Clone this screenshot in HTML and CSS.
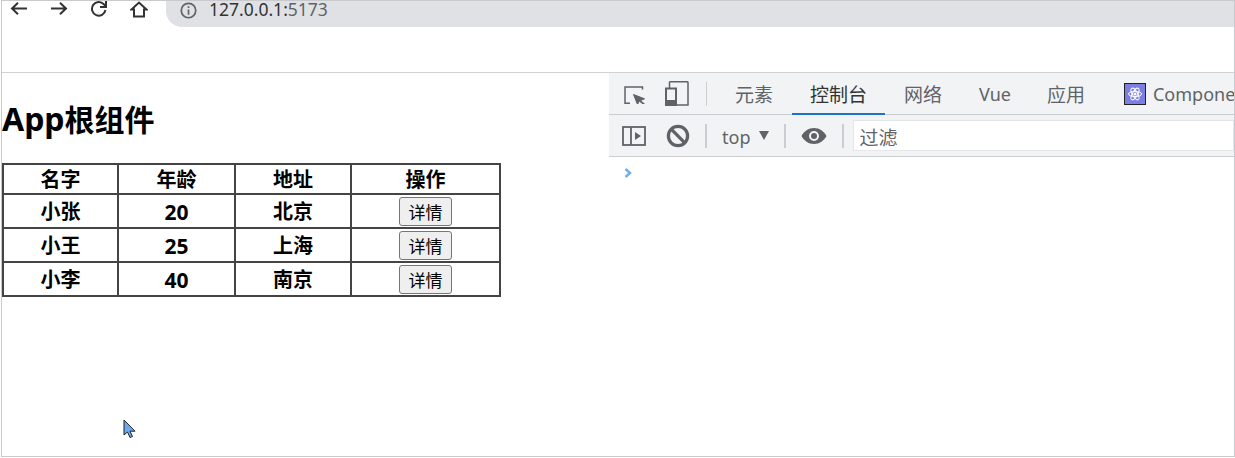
FILE: index.html
```html
<!DOCTYPE html>
<html lang="zh">
<head>
<meta charset="utf-8">
<title>App</title>
<link rel="stylesheet" href="styles.css">
</head>
<body>
<div class="frame">
  <header class="browser">
    <div class="nav">
      <svg class="nav-icon" viewBox="0 0 18 18"><path d="M17 8.500H2M8 2.800 2 8.500l6 5.700"/></svg>
      <svg class="nav-icon" viewBox="0 0 18 18"><path d="M1 8.500h15M10 2.800l6 5.700-6 5.700"/></svg>
      <svg class="nav-icon" viewBox="0 0 18 18"><path d="M15.500 10a6.800 6.800 0 1 1-1.700-5.800L15.800 6.500M16 1v6h-6"/></svg>
      <svg class="nav-icon" viewBox="0 0 18 18"><path d="M1.500 9.500 9 2.500l7.500 7H14V16.500H4V9.500z"/></svg>
    </div>
    <div class="omnibox">
      <svg class="info" viewBox="0 0 16 16"><circle cx="8" cy="8" r="6.800"/><path d="M8 7v5M8 4v1.600"/></svg>
      <span class="url">127.0.0.1:<span class="port">5173</span></span>
    </div>
  </header>
  <main class="split">
    <section class="app">
      <h1 class="title"><span class="latin">App</span>根组件</h1>
      <table class="people">
        <thead>
          <tr><th class="c1">名字</th><th class="c2">年龄</th><th class="c3">地址</th><th class="c4">操作</th></tr>
        </thead>
        <tbody>
          <tr><td>小张</td><td class="num">20</td><td>北京</td><td class="act"><button class="detail">详情</button></td></tr>
          <tr><td>小王</td><td class="num">25</td><td>上海</td><td class="act"><button class="detail">详情</button></td></tr>
          <tr><td>小李</td><td class="num">40</td><td>南京</td><td class="act"><button class="detail">详情</button></td></tr>
        </tbody>
      </table>
    </section>
    <section class="devtools">
      <div class="tabs">
        <svg class="tool inspect" viewBox="0 0 22 18"><path class="thin" d="M6 17.200H1V1h17.500v2.500"/><path class="arrow" d="m9.500 8.500 11 4.300-4 1.700 4 3.500-1.500 0-3.800-3-1.700 3.500z"/></svg>
        <svg class="tool device" viewBox="0 0 24 25"><path class="thin" d="M4.500 7V1.500A1 1 0 0 1 5.500.7h16.500a1 1 0 0 1 1 1V24H12"/><rect class="thick" x="1" y="7.500" width="10" height="16.500"/><rect class="solid" x="1" y="19" width="10" height="5"/></svg>
        <span class="divider tall"></span>
        <span class="tab t1">元素</span>
        <span class="tab active">控制台</span>
        <span class="tab t3">网络</span>
        <span class="tab t4">Vue</span>
        <span class="tab t5">应用</span>
        <svg class="vue-logo" viewBox="0 0 22 22"><rect x="0.500" y="0.500" width="21" height="21" fill="#7b80e0" stroke="#222"/><g fill="none" stroke="#fff" stroke-width="1"><ellipse cx="11" cy="11" rx="6.500" ry="2.600"/><ellipse cx="11" cy="11" rx="6.500" ry="2.600" transform="rotate(60 11 11)"/><ellipse cx="11" cy="11" rx="6.500" ry="2.600" transform="rotate(120 11 11)"/></g><circle cx="11" cy="11" r="1.500" fill="#fff"/></svg>
        <span class="tab comp">Components</span>
      </div>
      <div class="filters">
        <svg class="tool sidebar" viewBox="0 0 24 20"><rect class="thin2" x="1" y="1" width="22" height="18"/><path class="thin2" d="M9 1v18"/><path class="fillgrey" d="m13 6 6 4-6 4z"/></svg>
        <svg class="tool clear" viewBox="0 0 22 22"><circle class="ring" cx="11" cy="11" r="8.800"/><path class="ring" d="m5 5 12 12"/></svg>
        <span class="divider short d1"></span>
        <span class="ctx">top</span>
        <span class="caret"></span>
        <span class="divider short d2"></span>
        <svg class="tool eye" viewBox="0 0 26 16"><path class="fillgrey" fill-rule="evenodd" d="M13 0C7.500 0 3 3.300 0.500 8 3 12.700 7.500 16 13 16s10-3.300 12.500-8C23 3.300 18.500 0 13 0zm0 13a5 5 0 1 1 0-10 5 5 0 0 1 0 10z"/><circle class="fillgrey" cx="13" cy="8" r="3"/></svg>
        <span class="divider short d3"></span>
        <div class="filter"><span class="filter-text">过滤</span></div>
      </div>
      <div class="console">
        <svg class="prompt" viewBox="0 0 8 10"><path d="m1.500 1 4.500 4-4.500 4"/></svg>
      </div>
    </section>
  </main>
  <svg class="pointer" viewBox="0 0 14 20"><path d="M1 1v15l3.500-3 2.500 5.500 2.500-1-2.500-5.300h5z"/></svg>
</div>
</body>
</html>
```
FILE: styles.css
```css
* { box-sizing: border-box; }
html, body { margin: 0; padding: 0; background: #fff; }
body { width: 1235px; height: 458px; overflow: hidden; font-family: "Noto Sans CJK SC", "Noto Sans", sans-serif; }
.frame { position: relative; margin-left: 1px; width: 1234px; height: 457px; border: 1px solid #c8cacd; overflow: hidden; display: flex; flex-direction: column; }
.browser { height: 72px; flex: none; display: flex; align-items: flex-start; border-bottom: 1px solid #cfd1d4; }
.nav { display: flex; gap: 22px; padding: 0 0 0 8px; height: 18px; }
.nav-icon { width: 18px; height: 18px; fill: none; stroke: #333; stroke-width: 2; margin-top: -1px; }
.omnibox { margin-left: 18px; flex: 1; height: 26px; background: #dfe1e5; border-bottom-left-radius: 16px; display: flex; align-items: flex-start; padding-left: 14px; }
.info { width: 17px; height: 17px; margin-top: 1px; fill: none; stroke: #5f6368; stroke-width: 1.600; }
.url { margin-left: 12px; margin-top: -1px; font-family: "Noto Sans", sans-serif; font-size: 17.500px; line-height: 18px; color: #333; }
.port { color: #5f6368; }
.split { flex: 1; display: flex; min-height: 0; }
.app { width: 607px; flex: none; }
.title { margin: 26px 0 0; font-size: 30px; line-height: 40px; font-weight: 700; color: #000; font-family: "Noto Sans", "Noto Sans CJK SC", sans-serif; }
.latin { font-size: 32px; }
.people { margin: 23px 0 0 0; border-collapse: collapse; table-layout: fixed; width: 498px; font-family: "Noto Sans", "Noto Sans CJK SC", sans-serif; }
.people th, .people td { border: 2px solid #444; padding: 2px 0 0; text-align: center; font-size: 20px; font-weight: 700; color: #000; height: 34px; line-height: 24px; }
.people th { height: 30px; padding-top: 2px; }
.people .num { font-size: 21px; }
.people .act { padding: 0; }
.c1 { width: 115px; } .c2 { width: 117px; } .c3 { width: 116px; } .c4 { width: 149px; }
.detail { display: block; margin: 0 auto; width: 53px; height: 29px; padding: 0; border: 1px solid #767676; border-radius: 3px; background: #efefef; font: 400 17px/25px "Noto Sans CJK SC", sans-serif; color: #000; }
.devtools { flex: 1; min-width: 0; display: flex; flex-direction: column; overflow: hidden; }
.tabs { height: 42px; flex: none; background: #f1f3f4; border-bottom: 1px solid #cbcdd1; display: flex; align-items: center; white-space: nowrap; }
.filters { height: 42px; flex: none; background: #f1f3f4; border-bottom: 1px solid #cbcdd1; display: flex; align-items: center; white-space: nowrap; }
.tool { flex: none; }
.inspect { width: 22px; height: 18px; margin-left: 15px; margin-top: 2px; }
.device { width: 24px; height: 25px; margin-left: 19px; }
.thin { fill: none; stroke: #5f6368; stroke-width: 1.500; }
.thick { fill: #f1f3f4; stroke: #5f6368; stroke-width: 2; }
.solid { fill: #5f6368; }
.arrow { fill: #5f6368; stroke: #5f6368; stroke-width: 1; stroke-linejoin: round; }
.divider { flex: none; width: 1px; background: #cbcdd1; }
.divider.tall { height: 24px; margin-left: 17px; }
.divider.short { height: 24px; width: 2px; }
.tab { flex: none; font-size: 19px; line-height: 42px; color: #5f6368; height: 42px; }
.t1 { margin-left: 28px; }
.active { margin-left: 37px; color: #333; position: relative; }
.active::after { content: ""; position: absolute; left: -18px; right: -18px; bottom: 0; height: 2px; background: #1a73c8; }
.t3 { margin-left: 37px; }
.t4 { margin-left: 37px; font-family: "Noto Sans", sans-serif; font-size: 18px; }
.t5 { margin-left: 36px; }
.vue-logo { flex: none; width: 22px; height: 22px; margin-left: 39px; }
.comp { margin-left: 7px; font-family: "Noto Sans", sans-serif; font-size: 18px; }
.sidebar { width: 24px; height: 20px; margin-left: 13px; }
.thin2 { fill: none; stroke: #5f6368; stroke-width: 1.800; }
.fillgrey { fill: #5f6368; }
.clear { width: 24px; height: 24px; margin-left: 20px; }
.ring { fill: none; stroke: #5f6368; stroke-width: 3; }
.filters .divider.d1 { margin-left: 15px; }
.ctx { margin-left: 15px; margin-top: 2px; font-family: "Noto Sans", sans-serif; font-size: 18px; color: #5f6368; }
.caret { margin-left: 9px; width: 0; height: 0; border-left: 5.500px solid transparent; border-right: 5.500px solid transparent; border-top: 9px solid #5f6368; }
.filters .divider.d2 { margin-left: 15px; }
.eye { width: 26px; height: 16px; margin-left: 15px; }
.filters .divider.d3 { margin-left: 15px; }
.filter { margin-left: 9px; flex: 1; height: 31px; background: #fff; border: 1px solid #e4e6e8; padding-left: 5px; }
.filter-text { font-size: 19px; line-height: 31px; color: #5f6368; }
.console { flex: 1; background: #fff; padding: 11px 0 0 15px; }
.prompt { display: block; width: 8px; height: 10px; fill: none; stroke: #6fb1ea; stroke-width: 2.500; }
.pointer { position: absolute; left: 121px; top: 418px; width: 14px; height: 20px; fill: #6aa9f0; stroke: #222; stroke-width: 1; }
```
